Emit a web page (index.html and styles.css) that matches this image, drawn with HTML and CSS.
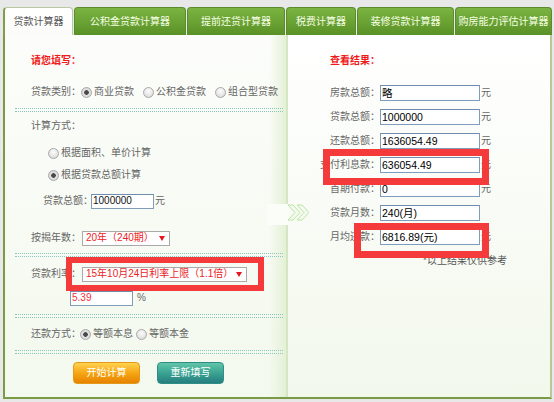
FILE: index.html
```html
<!DOCTYPE html>
<html lang="zh-CN">
<head>
<meta charset="utf-8">
<title>贷款计算器</title>
<link rel="stylesheet" href="styles.css">
</head>
<body>
<div class="calc">
  <div class="tabs">
    <div class="tab active w70">贷款计算器</div>
    <div class="tab w112">公积金贷款计算器</div>
    <div class="tab w98">提前还贷计算器</div>
    <div class="tab w70">税费计算器</div>
    <div class="tab w97">装修贷款计算器</div>
    <div class="tab w97">购房能力评估计算器</div>
  </div>
  <div class="board">
    <div class="left">
      <div class="row title">请您填写：</div>
      <div class="row type-row">
        <span class="lbl">贷款类别：</span>
        <span class="radio on"></span><span>商业贷款</span>
        <span class="radio gap"></span><span>公积金贷款</span>
        <span class="radio gap"></span><span>组合型贷款</span>
      </div>
      <div class="sep sep-a"></div>
      <div class="row method-row">计算方式：</div>
      <div class="row opt opt-1"><span class="radio"></span><span>根据面积、单价计算</span></div>
      <div class="row opt opt-2"><span class="radio on"></span><span>根据贷款总额计算</span></div>
      <div class="row amount-row">
        <span class="lbl">贷款总额：</span>
        <span class="field field-amount">1000000</span>
        <span class="unit">元</span>
      </div>
      <div class="row years-row">
        <span class="lbl">按揭年数：</span>
        <span class="select select-years"><span>20年（240期）</span><span class="caret"></span></span>
      </div>
      <div class="sep sep-b"></div>
      <div class="row rate-row">
        <span class="lbl">贷款利率：</span>
        <span class="select select-rate"><span>15年10月24日利率上限（1.1倍）</span><span class="caret"></span></span>
      </div>
      <div class="row rate-input-row">
        <span class="field field-rate">5.39</span>
        <span class="pct">%</span>
      </div>
      <div class="sep sep-c"></div>
      <div class="row repay-row">
        <span class="lbl">还款方式：</span>
        <span class="radio on first"></span><span>等额本息</span>
        <span class="radio second"></span><span>等额本金</span>
      </div>
      <div class="sep sep-c"></div>
      <div class="row buttons">
        <span class="btn btn-orange">开始计算</span>
        <span class="btn btn-teal">重新填写</span>
      </div>
    </div>
    <div class="divider"></div>
    <div class="right">
      <div class="row title r-title">查看结果：</div>
      <div class="results">
        <div class="res"><span class="rlbl">房款总额：</span><span class="field rfield">略</span><span class="unit">元</span></div>
        <div class="res"><span class="rlbl">贷款总额：</span><span class="field rfield">1000000</span><span class="unit">元</span></div>
        <div class="res"><span class="rlbl">还款总额：</span><span class="field rfield">1636054.49</span><span class="unit">元</span></div>
        <div class="res"><span class="rlbl">支付利息款：</span><span class="field rfield">636054.49</span><span class="unit">元</span></div>
        <div class="res"><span class="rlbl">首期付款：</span><span class="field rfield">0</span><span class="unit">元</span></div>
        <div class="res"><span class="rlbl">贷款月数：</span><span class="field rfield">240(月)</span></div>
        <div class="res"><span class="rlbl">月均还款：</span><span class="field rfield">6816.89(元)</span><span class="unit">元</span></div>
      </div>
      <div class="row note">*以上结果仅供参考</div>
    </div>
    <svg class="chevron" width="42" height="24" viewBox="0 0 42 24">
      <rect x="0" y="1" width="21" height="21" fill="#fbfdf8"/>
      <polygon points="21,2 26,2 33,9.5 26,17 21,17 28,9.5" fill="#f3faee" stroke="#bfe3a4" stroke-width="1"/>
      <polygon points="30,2 35,2 42,9.5 35,17 30,17 37,9.5" fill="#f3faee" stroke="#bfe3a4" stroke-width="1"/>
    </svg>
    <div class="mark mark-rate"></div>
    <div class="mark mark-interest"></div>
    <div class="mark mark-monthly"></div>
  </div>
</div>
</body>
</html>
```

FILE: styles.css
```css
* { box-sizing: border-box; }

body {
  margin: 0;
  background: #e8e8e8;
  font: 10px/1 "Liberation Sans", "Noto Sans CJK SC", sans-serif;
  color: #666;
}

.calc {
  width: 549px;
  margin-left: 3px;
  padding-top: 7px;
}

/* tabs */
.tabs {
  display: flex;
  gap: 1px;
  height: 28px;
}
.tab {
  height: 28px;
  border: 1px solid #5c8b2e;
  border-bottom: none;
  border-radius: 4px 4px 0 0;
  background: linear-gradient(#7bb441, #5a9127);
  color: #f6ffe4;
  display: flex;
  align-items: center;
  justify-content: center;
  white-space: nowrap;
}
.tab.active {
  background: linear-gradient(#ffffff, #fbfcf9);
  color: #555;
  border-color: #b8c8a0;
  border-left: 2px solid #7f9d4a;
}
.w70 { width: 70px; }
.w97 { width: 97px; }
.w98 { width: 98px; }
.w112 { width: 112px; }

/* board */
.board {
  position: relative;
  display: flex;
  height: 364px;
  border-left: 2px solid #7b9a45;
  border-bottom: 2px solid #7b9a45;
  border-right: 2px solid #b6c997;
}
.left {
  width: 281px;
  padding-top: 16px;
  background:
    linear-gradient(to right, rgba(232, 243, 220, 0) 264px, #e4f0d6 281px),
    linear-gradient(#fcfdfa, #f3f9ee);
}
.divider {
  width: 2px;
  background: #d5e7c2;
}
.right {
  flex: 1;
  padding-top: 16px;
  background: linear-gradient(#ffffff, #f2f8ec);
}

.row {
  display: flex;
  align-items: center;
  height: 20px;
  padding-left: 26px;
  white-space: nowrap;
}
.title {
  color: #f01a1a;
  font-weight: bold;
}
.sep {
  margin: 6px 0 0 10px;
  width: 268px;
  height: 4px;
  border-top: 1px dotted #86c6bd;
  border-bottom: 1px dotted #86c6bd;
}

/* radios */
.radio {
  flex: none;
  width: 11px;
  height: 11px;
  border-radius: 50%;
  border: 1px solid #a9a9a9;
  background: radial-gradient(circle at 50% 35%, #fdfdfd, #d4d4d4);
  margin-right: 2px;
}
.radio.on {
  background: radial-gradient(circle, #4a4a4a 0 2px, #e4e4e4 2.6px, #cdcdcd);
}
.radio.gap { margin-left: 9px; }

/* left rows */
.type-row { margin-top: 11px; }
.method-row { margin-top: 4px; }
.opt { padding-left: 43px; }
.opt-1 { margin-top: 7px; }
.opt-2 { margin-top: 2px; }
.amount-row { margin-top: 6px; padding-left: 38px; }
.years-row { margin-top: 17px; }
.sep-a { margin-top: 6px; }
.sep-b { margin-top: 5px; }
.rate-row { margin-top: 7px; }
.rate-input-row { margin-top: 4px; padding-left: 65px; }
.repay-row { margin-top: 6px; }
.repay-row .first { margin-left: -1px; }
.repay-row .second { margin-left: 3px; }
.buttons { margin-top: 8px; height: 22px; padding-left: 68px; gap: 17px; }

.field {
  display: flex;
  align-items: center;
  height: 15px;
  border: 1px solid #7f9db9;
  border-top-color: #6f8cab;
  background: #fff;
  color: #111;
  padding-left: 1px;
}
.field-amount { width: 63px; margin-left: -2px; }
.field-rate { width: 63px; color: #f0303a; }
.unit { margin-left: 1px; }
.pct { margin-left: 4px; }

.select {
  display: flex;
  align-items: center;
  justify-content: space-between;
  height: 15px;
  margin-left: 1px;
  border: 1px solid #aaa;
  background: #fff;
  color: #ec1d25;
  padding: 0 4px 0 3px;
}
.select-years { width: 88px; }
.select-rate { width: 165px; }
.caret {
  width: 0;
  height: 0;
  border-left: 3px solid transparent;
  border-right: 3px solid transparent;
  border-top: 5px solid #e8141c;
}

.btn {
  width: 67px;
  height: 22px;
  border-radius: 4px;
  display: flex;
  align-items: center;
  justify-content: center;
  color: #fff;
}
.btn-orange {
  background: linear-gradient(#ffd24f, #f6a614 50%, #e68300);
  border: 1px solid #e39a18;
}
.btn-teal {
  background: linear-gradient(#61c6a8, #3aa392 50%, #267e80);
  border: 1px solid #2e8e85;
}

/* right */
.r-title { padding-left: 42px; }
.results { margin-top: 10px; }
.res {
  display: flex;
  align-items: center;
  height: 24px;
  white-space: nowrap;
}
.rlbl {
  width: 92px;
  text-align: right;
}
.rfield {
  width: 100px;
  height: 16px;
  color: #000;
  font-size: 10.5px;
}
.note {
  margin-top: 2px;
  padding-left: 135px;
  color: #555;
}

/* decorations and annotations */
.chevron {
  position: absolute;
  left: 262px;
  top: 168px;
}
.mark {
  position: absolute;
  border: 7px solid #f43a3a;
}
.mark-rate { left: 61px; top: 222px; width: 198px; height: 34px; border-width: 6px; }
.mark-interest { left: 318px; top: 114px; width: 166px; height: 36px; }
.mark-monthly { left: 349px; top: 188px; width: 135px; height: 35px; }
```
